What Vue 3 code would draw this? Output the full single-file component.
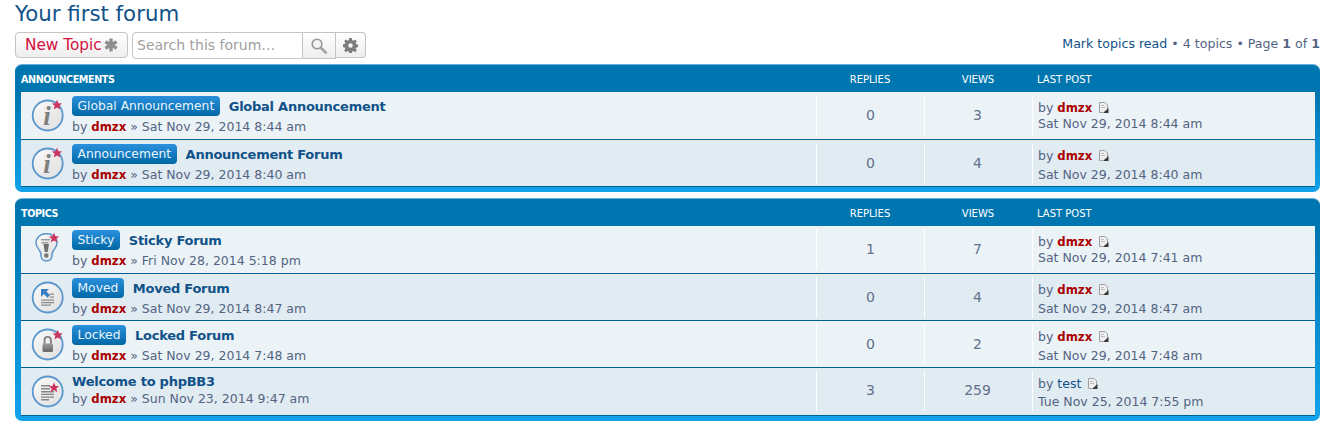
<template>
  <div class="page">
    <h2 class="forum-title">Your first forum</h2>

    <div class="action-bar">
      <a class="button new-topic">New Topic<svg class="plus" viewBox="0 0 14 14">
          <rect x="5.300" y="0.500" width="3.400" height="13" />
          <rect x="5.300" y="0.500" width="3.400" height="13" transform="rotate(60 7 7)" />
          <rect x="5.300" y="0.500" width="3.400" height="13" transform="rotate(120 7 7)" />
        </svg></a>
      <div class="search-box">
        <span class="search-input">Search this forum…</span>
        <span class="search-btn">
          <svg viewBox="0 0 18 18" width="18" height="18">
            <path d="M10.500 10.500l5.200 5" stroke="#a8a8a8" stroke-width="3" stroke-linecap="round" />
            <circle cx="7" cy="7" r="4.800" fill="#f2f2f2" stroke="#979797" stroke-width="1.600" />
          </svg>
        </span>
        <span class="gear-btn">
          <svg viewBox="0 0 16 16" width="15" height="15">
            <path fill="#7d7d7d" fill-rule="evenodd" d="M6.600 0h2.800l.3 2.200 1.300.6 1.800-1.300 2 2-1.300 1.800.6 1.300 2.200.3v2.800l-2.200.3-.6 1.300 1.300 1.800-2 2-1.800-1.300-1.300.6-.3 2.200H6.600l-.3-2.200-1.300-.6-1.800 1.300-2-2 1.300-1.800-.6-1.300L-.3 9.400V6.600l2.200-.3.6-1.300L1.200 3.500l2-2L5 2.800l1.300-.6zM8 5.600a2.400 2.400 0 1 0 0 4.800 2.400 2.400 0 0 0 0-4.800z" />
          </svg>
        </span>
      </div>
      <div class="pagination">
        <a class="link">Mark topics read</a> • 4 topics • Page <b>1</b> of <b>1</b>
      </div>
    </div>

    <section v-for="block in blocks" :key="block.title" class="forumbg">
      <div class="head">
        <div class="head-title">{{ block.title }}</div>
        <div class="head-num">REPLIES</div>
        <div class="head-num">VIEWS</div>
        <div class="head-last">LAST POST</div>
      </div>
      <ul class="topics">
        <li v-for="(t, i) in block.topics" :key="t.title" class="topic" :class="i % 2 ? 'even' : 'odd'">
          <div class="main">
            <svg class="topic-icon" viewBox="0 0 36 36" width="36" height="36">
              <defs>
                <linearGradient id="disc" x1="0" y1="0" x2="1" y2="1">
                  <stop offset="0" stop-color="#fbfbfb" />
                  <stop offset="1" stop-color="#dedede" />
                </linearGradient>
                <linearGradient id="metal" x1="0" y1="0" x2="0" y2="1">
                  <stop offset="0" stop-color="#9c9c9c" />
                  <stop offset="1" stop-color="#666" />
                </linearGradient>
              </defs>
              <template v-if="t.icon === 'sticky'">
                <path d="M17.500 2.500c-6 0-10.500 4.300-10.500 9.500 0 3.800 2.500 6 3.800 8 1.200 1.800 1.200 4 1.400 5.500.3 2.500 2.300 4.500 5.300 4.500s5-2 5.300-4.500c.2-1.500.2-3.700 1.400-5.500 1.300-2 3.800-4.200 3.800-8 0-5.200-4.500-9.500-10.500-9.500z" fill="url(#disc)" stroke="#5b97cc" stroke-width="1.500" />
                <path d="M12 8h9v1.400h-9zM12.500 11h7v1.600h-7z" fill="#9a9a9a" />
                <path d="M14.500 13h5.500l-1.300 8h-3z" fill="#6f6f6f" />
                <circle cx="17.300" cy="24.500" r="2.200" fill="#777" />
              </template>
              <template v-else>
                <circle cx="18.700" cy="18.500" r="15" fill="url(#disc)" stroke="#5b97cc" stroke-width="1.800" />
                <text v-if="t.icon === 'info'" x="18" y="27.500" class="info-i">i</text>
                <template v-if="t.icon === 'moved'">
                  <path d="M12 10h8l-2.600 2.600 3.600 3.600-2.500 2.500-3.600-3.600L12 18z" fill="#3a7fc4" />
                  <path d="M20.500 14.500h4.500v1.300h-4.500zM21 17.500h4v1.300h-4zM12 20.500h13v1.300H12zM12 23h13v1.300H12zM12 25.500h10v1.300H12z" fill="#8a8a8a" />
                </template>
                <template v-if="t.icon === 'locked'">
                  <path d="M15.500 18v-4a3.200 3.200 0 0 1 6.400 0v4" fill="none" stroke="#808080" stroke-width="1.800" />
                  <rect x="13.500" y="17.500" width="10.500" height="8.500" rx="1.500" fill="url(#metal)" />
                </template>
                <path v-if="t.icon === 'read'" d="M12 12h9v1.400h-9zM12 15h9v1.400h-9zM12 18h13v1.400H12zM12 20.700h13v1.400H12zM12 23.400h13v1.400H12zM12 26h8v1.400h-8z" fill="#868686" />
              </template>
              <path v-if="t.icon !== 'moved'" :transform="starAt[t.icon]" d="M0-5.200 1.500-1.700 5.200-1.500 2.300.8 3.300 4.500 0 2.400 -3.300 4.500 -2.300.8 -5.200-1.500 -1.500-1.700z" fill="#cc3560" />
            </svg>
            <div class="text">
              <div class="title-line" :class="{ plain: !t.label }">
                <span v-if="t.label" class="label">{{ t.label }}</span>
                <a class="topic-title">{{ t.title }}</a>
              </div>
              <div class="meta">by <a class="author">dmzx</a> » {{ t.date }}</div>
            </div>
          </div>
          <div class="num">{{ t.replies }}</div>
          <div class="num">{{ t.views }}</div>
          <div class="last">
            <div class="last-by">
              by <a :class="t.lastBy === 'test' ? 'user' : 'author'">{{ t.lastBy }}</a>
              <svg class="latest" viewBox="0 0 11 11" width="11" height="11">
                <path d="M1.500.5h5.500l2.500 2.500v7.500h-8z" fill="#efefef" stroke="#a0a0a0" />
                <path d="M6 10 10.500 6v5H6z" fill="#3a3a3a" />
                <path d="M3 3h3v1H3zM3 5h4v1H3z" fill="#bdbdbd" />
              </svg>
            </div>
            <div>{{ t.lastDate }}</div>
          </div>
        </li>
      </ul>
    </section>
  </div>
</template>

<script setup>
const starAt = {
  info: 'translate(28 8)',
  sticky: 'translate(25 7)',
  locked: 'translate(28.700 9)',
  read: 'translate(25 14.700)'
}

const blocks = [
  {
    title: 'ANNOUNCEMENTS',
    topics: [
      { icon: 'info', label: 'Global Announcement', title: 'Global Announcement', date: 'Sat Nov 29, 2014 8:44 am', replies: 0, views: 3, lastBy: 'dmzx', lastDate: 'Sat Nov 29, 2014 8:44 am' },
      { icon: 'info', label: 'Announcement', title: 'Announcement Forum', date: 'Sat Nov 29, 2014 8:40 am', replies: 0, views: 4, lastBy: 'dmzx', lastDate: 'Sat Nov 29, 2014 8:40 am' }
    ]
  },
  {
    title: 'TOPICS',
    topics: [
      { icon: 'sticky', label: 'Sticky', title: 'Sticky Forum', date: 'Fri Nov 28, 2014 5:18 pm', replies: 1, views: 7, lastBy: 'dmzx', lastDate: 'Sat Nov 29, 2014 7:41 am' },
      { icon: 'moved', label: 'Moved', title: 'Moved Forum', date: 'Sat Nov 29, 2014 8:47 am', replies: 0, views: 4, lastBy: 'dmzx', lastDate: 'Sat Nov 29, 2014 8:47 am' },
      { icon: 'locked', label: 'Locked', title: 'Locked Forum', date: 'Sat Nov 29, 2014 7:48 am', replies: 0, views: 2, lastBy: 'dmzx', lastDate: 'Sat Nov 29, 2014 7:48 am' },
      { icon: 'read', label: '', title: 'Welcome to phpBB3', date: 'Sun Nov 23, 2014 9:47 am', replies: 3, views: 259, lastBy: 'test', lastDate: 'Tue Nov 25, 2014 7:55 pm' }
    ]
  }
]
</script>

<style scoped>
.page {
  width: 1331px;
  height: 425px;
  overflow: hidden;
  box-sizing: border-box;
  padding: 0 11px 0 15px;
  font-family: "DejaVu Sans", Verdana, sans-serif;
  font-size: 12.5px;
  color: #536482;
  background: #fff;
}

.forum-title {
  margin: 0;
  height: 32px;
  font-size: 21.300px;
  line-height: 27px;
  font-weight: 400;
  color: #105289;
}

.action-bar {
  display: flex;
  align-items: flex-start;
  height: 32px;
}

.button {
  display: flex;
  align-items: center;
  box-sizing: border-box;
  height: 26px;
  border: 1px solid #c7c3bf;
  border-radius: 4px;
  background: linear-gradient(#fff, #eee);
}

.new-topic {
  width: 113px;
  padding-left: 9px;
  font-size: 15.300px;
  color: #d31141;
}

.plus {
  width: 14px;
  height: 14px;
  margin-left: 2px;
  fill: #8f8f8f;
}

.search-box {
  display: flex;
  height: 27px;
  margin-left: 4px;
}

.search-input {
  box-sizing: border-box;
  width: 171px;
  height: 27px;
  padding-left: 4px;
  line-height: 25px;
  font-size: 14px;
  color: #a0a0a0;
  background: #fff;
  border: 1px solid #c7c3bf;
  border-radius: 4px 0 0 4px;
}

.search-btn,
.gear-btn {
  display: flex;
  align-items: center;
  justify-content: center;
  box-sizing: border-box;
  border: 1px solid #c7c3bf;
  border-left: 0;
  background: linear-gradient(#fff, #eee);
}

.search-btn {
  width: 33px;
  height: 27px;
}

.gear-btn {
  width: 30px;
  height: 26px;
  border-radius: 0 4px 4px 0;
}

.pagination {
  margin-left: auto;
  padding-top: 4px;
  line-height: 16px;
  font-size: 12.600px;
  white-space: nowrap;
}

.link {
  color: #105289;
}

.forumbg {
  box-sizing: border-box;
  margin-bottom: 6px;
  padding: 0 5px 5px 6px;
  border-radius: 7px;
  border-top: 1px solid #6aaedb;
  background: linear-gradient(#0076b1, #0076b1 30px, #12a3eb);
}

.head {
  display: grid;
  grid-template-columns: 795px 108px 108px 1fr;
  box-sizing: border-box;
  height: 27px;
  padding-top: 2px;
  align-items: center;
  font-size: 10px;
  color: #fff;
}

.head-title {
  font-size: 9.600px;
  letter-spacing: -0.4px;
  font-weight: 700;
}

.head-num {
  text-align: center;
}

.head-last {
  padding-left: 5px;
}

.topics {
  margin: 0;
  padding: 0;
  list-style: none;
  border-bottom: 1px solid #00608f;
}

.topic {
  display: grid;
  grid-template-columns: 795px 108px 108px 1fr;
  box-sizing: border-box;
  height: 47px;
  padding: 3px 0 4px;
  border-top: 1px solid #00608f;
}

.topic:first-child {
  border-top: 0;
}

.topic:nth-child(4) {
  height: 48px;
}

.odd {
  background: #ecf3f7;
}

.even {
  background: #e1ebf2;
}

.main {
  display: flex;
}

.topic-icon {
  flex: none;
  margin: 2px 0 0 8px;
}

.text {
  margin: -1px 0 0 7px;
}

.title-line {
  display: flex;
  align-items: center;
  height: 24px;
}

.title-line.plain {
  height: 17px;
  padding-top: 3px;
}

.label {
  box-sizing: border-box;
  height: 20px;
  margin-right: 9px;
  padding: 0 5.500px;
  line-height: 20px;
  font-size: 12.300px;
  color: #e8f4fb;
  border-radius: 4px;
  background: linear-gradient(#2a90dd, #0068a5);
}

.topic-title {
  font-size: 13px;
  letter-spacing: -0.25px;
  font-weight: 700;
  color: #105289;
}

.meta {
  line-height: 18px;
}

.author {
  font-size: 11.700px;
  font-weight: 700;
  color: #a00;
}

.user {
  color: #105289;
}

.num {
  display: flex;
  align-items: center;
  justify-content: center;
  padding-bottom: 2px;
  font-size: 14px;
  color: #62718d;
  border-left: 1px solid #fff;
}

.num + .num {
  padding-right: 2px;
}

.last {
  padding: 4px 0 0 5px;
  line-height: 17.500px;
  border-left: 1px solid #fff;
}

.topic:first-child .last {
  padding-top: 5px;
  line-height: 16px;
}

.latest {
  margin-left: 6px;
  vertical-align: -1px;
}

.info-i {
  font-family: "Liberation Serif", serif;
  font-size: 27px;
  font-weight: 700;
  font-style: italic;
  text-anchor: middle;
  fill: #7f7f7f;
}
</style>
